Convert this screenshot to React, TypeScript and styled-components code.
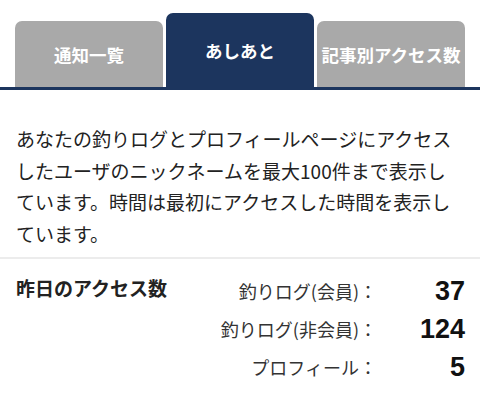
import React from 'react';
import styled, { createGlobalStyle } from 'styled-components';

const GlobalStyle = createGlobalStyle`
  body {
    margin: 0;
    background: #fff;
    font-family: 'Noto Sans CJK JP', 'Noto Sans', sans-serif;
    color: #222;
  }
`;

const tabs = [
  { label: '通知一覧', active: false },
  { label: 'あしあと', active: true },
  { label: '記事別アクセス数', active: false },
];

const stats = [
  { label: '釣りログ(会員)：', value: 37 },
  { label: '釣りログ(非会員)：', value: 124 },
  { label: 'プロフィール：', value: 5 },
];

const App = () => (
  <Page>
    <GlobalStyle />
    <TabBar>
      {tabs.map((t) => (
        <Tab key={t.label} $active={t.active}>
          {t.label}
        </Tab>
      ))}
    </TabBar>
    <Description>
      あなたの釣りログとプロフィールページにアクセスしたユーザのニックネームを最大100件まで表示しています。時間は最初にアクセスした時間を表示しています。
    </Description>
    <Stats>
      <StatsTitle>昨日のアクセス数</StatsTitle>
      <StatsTable>
        {stats.map((s) => (
          <React.Fragment key={s.label}>
            <StatLabel>{s.label}</StatLabel>
            <StatValue>{s.value}</StatValue>
          </React.Fragment>
        ))}
      </StatsTable>
    </Stats>
  </Page>
);

const Page = styled.div`
  width: 480px;
`;

const TabBar = styled.div`
  display: flex;
  align-items: flex-end;
  gap: 3px;
  height: 87px;
  padding: 0 15px;
  border-bottom: 3px solid #1c355e;
`;

const Tab = styled.div<{ $active: boolean }>`
  display: flex;
  align-items: center;
  justify-content: center;
  width: 148px;
  height: ${(p) => (p.$active ? 74 : 66)}px;
  border-radius: 7px 7px 0 0;
  background: ${(p) => (p.$active ? '#1c355e' : '#a9a9a9')};
  color: #fff;
  font-size: 17.5px;
  font-weight: 700;
  white-space: nowrap;
`;

const Description = styled.p`
  margin: 0;
  padding: 33px 16px 8px;
  font-size: 19px;
  line-height: 31.5px;
  color: #222;
  border-bottom: 2px solid #ececec;
`;

const Stats = styled.div`
  display: flex;
  align-items: flex-start;
  padding: 13px 15px 0 16px;
`;

const StatsTitle = styled.div`
  flex: 1;
  font-size: 19px;
  font-weight: 700;
  line-height: 32px;
  color: #222;
`;

const StatsTable = styled.div`
  display: grid;
  grid-template-columns: auto 88px;
  grid-auto-rows: 38px;
  align-items: center;
`;

const StatLabel = styled.div`
  justify-self: end;
  font-size: 18px;
  color: #333;
`;

const StatValue = styled.div`
  justify-self: end;
  font-family: 'Liberation Sans', Arial, sans-serif;
  font-size: 27px;
  font-weight: 700;
  color: #111;
`;

export default App;
